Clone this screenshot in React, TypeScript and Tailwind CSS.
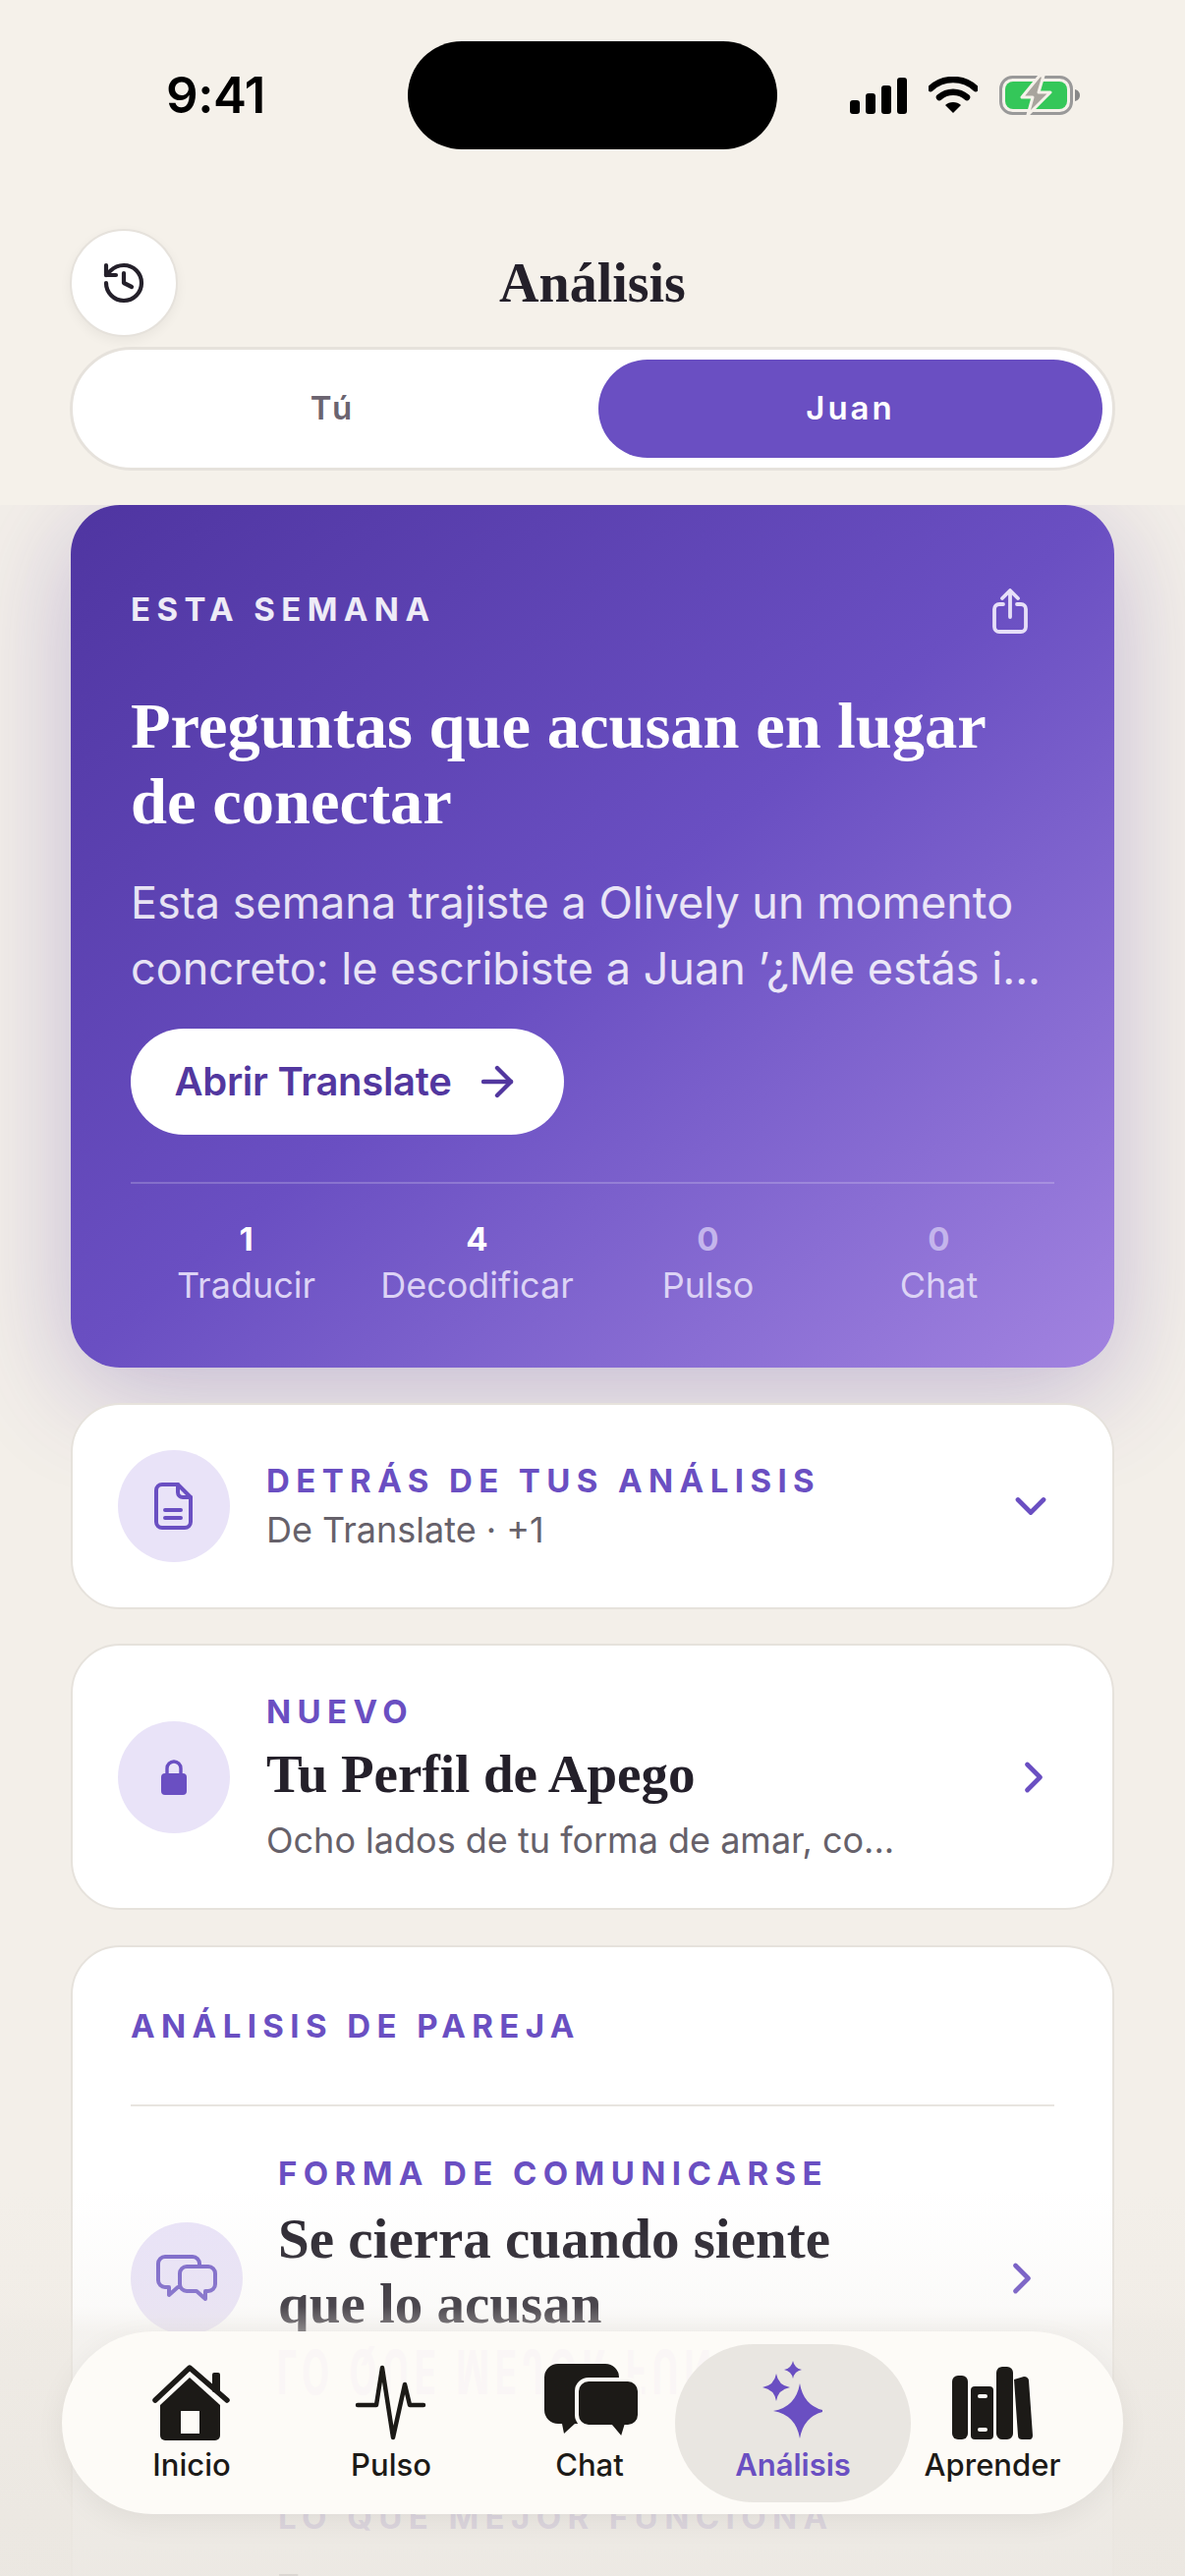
import React from 'react';
import { ArrowRight, ChevronDown, ChevronRight, History } from 'lucide-react';

const serif = "font-['Liberation_Serif',serif]";
const sans = "font-['Inter',sans-serif]";

const star = (cx: number, cy: number, rx: number, ry: number, k: number) =>
    `M${cx} ${cy - ry}Q${cx + k} ${cy - k} ${cx + rx} ${cy}Q${cx + k} ${cy + k} ${cx} ${cy + ry}Q${cx - k} ${cy + k} ${cx - rx} ${cy}Q${cx - k} ${cy - k} ${cx} ${cy - ry}Z`;

const HomeIcon = () => (
    <svg width="80" height="80" viewBox="0 0 80 80" fill="#1c1a17">
        <path d="M3 37 38 4 76 37" fill="none" stroke="#1c1a17" strokeWidth="5.5" strokeLinecap="round" strokeLinejoin="round" />
        <rect x="61" y="9" width="8" height="20" rx="2" />
        <path d="M38 14 69 42V73a5 5 0 0 1-5 5H13a5 5 0 0 1-5-5V42Z" />
        <rect x="29" y="48" width="19" height="23" fill="#fdfbf7" />
    </svg>
);

const PulseIcon = () => (
    <svg width="76" height="80" viewBox="0 0 76 80" fill="none" stroke="#1c1a17" strokeWidth="4.5" strokeLinecap="round" strokeLinejoin="round">
        <path d="M4 42H23L29 4 40 75 52 21 57 42H71" />
    </svg>
);

const ChatIcon = () => (
    <svg width="102" height="82" viewBox="0 0 102 82" fill="#1c1a17" className="ml-[5px]">
        <path d="M16 2H64A14 14 0 0 1 78 16V49A14 14 0 0 1 64 63H33L22 73 20 63H16A14 14 0 0 1 2 49V16A14 14 0 0 1 16 2Z" />
        <path d="M47 18H87A12 12 0 0 1 99 30V54A12 12 0 0 1 87 66H85L81 79 70 66H47A12 12 0 0 1 35 54V30A12 12 0 0 1 47 18Z" stroke="#fdfbf7" strokeWidth="4" />
    </svg>
);

const SparkIcon = () => (
    <svg width="70" height="84" viewBox="0 0 70 84" fill="#6a4fc2" className="-ml-[11px]">
        <path d={star(47, 52, 27, 28, 4)} />
        <path d={star(23, 28, 14, 14, 2)} />
        <path d={star(40, 10, 9, 9, 1.5)} />
    </svg>
);

const BooksIcon = () => (
    <svg width="90" height="80" viewBox="0 0 90 80" fill="#1c1a17">
        <rect x="4" y="12" width="16" height="65" rx="6" />
        <rect x="23" y="23" width="23" height="54" rx="4" />
        <rect x="49" y="3" width="17" height="74" rx="6" />
        <path d="M67 16 77 13C80 13 82 15 82 17L86 73C86 75 85 77 83 77H75C73 77 71 76 71 73Z" />
        <rect x="30" y="31" width="10" height="4" rx="2" fill="#fdfbf7" />
        <rect x="30" y="65" width="10" height="4" rx="2" fill="#fdfbf7" />
    </svg>
);

const ShareIcon = () => (
    <svg width="36" height="46" viewBox="0 0 36 46" fill="none" stroke="#e6dff8" strokeWidth="3.8" strokeLinecap="round" strokeLinejoin="round">
        <path d="M11 16H7a5 5 0 0 0-5 5V39a5 5 0 0 0 5 5H29a5 5 0 0 0 5-5V21a5 5 0 0 0-5-5H25" />
        <path d="M18 29V3M10 10 18 2 26 10" />
    </svg>
);

const DocIcon = () => (
    <svg width="40" height="48" viewBox="0 0 40 48" fill="none" stroke="#6a4fc2" strokeWidth="4" strokeLinecap="round" strokeLinejoin="round">
        <path d="M8 2H24L37 15V40a6 6 0 0 1-6 6H8a6 6 0 0 1-6-6V8a6 6 0 0 1 6-6Z" />
        <path d="M24 2V10a5 5 0 0 0 5 5H37M11 28H27M11 36H27" />
    </svg>
);

const LockIcon = () => (
    <svg width="28" height="36" viewBox="0 0 28 36" fill="#6a4fc2">
        <path d="M7 16V9a7 7 0 0 1 14 0V16" fill="none" stroke="#6a4fc2" strokeWidth="3.4" />
        <rect x="1" y="14" width="26" height="22" rx="4" />
    </svg>
);

const BubblesIcon = () => (
    <svg width="62" height="48" viewBox="0 0 62 48" fill="none" stroke="#7560c8" strokeWidth="4" strokeLinecap="round" strokeLinejoin="round">
        <path d="M9 2H37A7 7 0 0 1 44 9V26A7 7 0 0 1 37 33H22L13 41V33H9A7 7 0 0 1 2 26V9A7 7 0 0 1 9 2Z" />
        <path d="M31 12H53A7 7 0 0 1 60 19V30A7 7 0 0 1 53 37H50V45L41 37H31A7 7 0 0 1 24 30V19A7 7 0 0 1 31 12Z" fill="#e9e3f8" />
    </svg>
);

const StatusIcons = () => (
    <div className="flex items-center gap-[22px]">
        <div className="flex items-end gap-[6px]">
            <div className="w-[10px] h-[14px] rounded-[3px] bg-black" />
            <div className="w-[10px] h-[21px] rounded-[3px] bg-black" />
            <div className="w-[10px] h-[29px] rounded-[3px] bg-black" />
            <div className="w-[10px] h-[37px] rounded-[3px] bg-black" />
        </div>
        <svg width="50" height="38" viewBox="0 0 50 38">
            <path d="M2 12C15 0 35 0 48 12" fill="none" stroke="#000" strokeWidth="6.5" strokeLinecap="round" />
            <path d="M11 21C19 14 31 14 39 21" fill="none" stroke="#000" strokeWidth="6.5" strokeLinecap="round" />
            <path d="M17 29C21 25 29 25 33 29L25 37Z" />
        </svg>
        <svg width="84" height="40" viewBox="0 0 84 40">
            <rect x="1.5" y="1.5" width="72" height="37" rx="12" fill="none" stroke="#999" strokeWidth="3" />
            <rect x="6" y="6" width="63" height="28" rx="8" fill="#34c759" />
            <path d="M77 14C81 15 82 18 82 20C82 22 81 25 77 26Z" fill="#888" />
            <path d="M41 0 23 22H34L29 40 52 17H40L45 0Z" fill="#a8a49d" stroke="#f5f1ea" strokeWidth="3" strokeLinejoin="round" />
        </svg>
    </div>
);

const Stat = ({ value, label, dim }: { value: string; label: string; dim?: boolean }) => (
    <div className="flex flex-col items-center">
        <span className={`text-[33px] leading-[44px] font-bold ${dim ? 'text-[#c4b5ec]' : 'text-white'}`}>{value}</span>
        <span className="text-[36px] leading-[50px] text-[#dcd3f5]">{label}</span>
    </div>
);

const NavItem = ({ icon, label, active, className }: { icon: React.ReactNode; label: string; active?: boolean; className: string }) => (
    <div className={`relative shrink-0 flex flex-col items-center justify-end h-[161px] pb-[19px] ${active ? 'rounded-[80px] bg-[#e9e6e1]' : ''} ${className}`}>
        <div className="h-[84px] flex items-end justify-center">{icon}</div>
        <span className={`mt-[4px] text-[31px] leading-[38px] ${active ? 'font-semibold text-[#6a4fc2]' : 'font-medium text-[#1c1a17]'}`}>{label}</span>
    </div>
);

const IconCircle = ({ children }: { children: React.ReactNode }) => (
    <div className="w-[114px] h-[114px] shrink-0 rounded-full bg-[#e9e3f8] flex items-center justify-center text-[#6a4fc2]">{children}</div>
);

const labelClass = 'text-[33px] leading-[44px] font-bold tracking-[6.4px] text-[#6a4fc2]';

const App: React.FC = () => {
    return (
        <div className={`relative w-[1206px] h-[2622px] overflow-hidden bg-[#f3efe9] ${sans}`}>
            {/* Header */}
            <div className="relative z-10 bg-[#f5f1ea] h-[514px]">
                <div className="flex pt-[42px] h-[233px]">
                    <div className="w-[415px] h-[110px] flex items-center justify-center pl-[24px]">
                        <span className="text-[51px] font-semibold text-black tracking-[-0.5px]">9:41</span>
                    </div>
                    <div className="w-[376px] h-[110px] rounded-[55px] bg-black" />
                    <div className="w-[415px] h-[110px] flex items-center pl-[74px]">
                        <StatusIcons />
                    </div>
                </div>
                <div className="px-[71px]">
                    <div className="grid grid-cols-[110px_1fr_110px] items-center">
                        <div className="w-[110px] h-[110px] rounded-full bg-white border-2 border-[#e6e2dc] flex items-center justify-center shadow-[0_4px_12px_rgba(0,0,0,0.05)]">
                            <History size={48} strokeWidth={2.1} className="text-[#24202a]" />
                        </div>
                        <h1 className={`text-center text-[56px] font-bold text-[#24202a] ${serif}`}>Análisis</h1>
                    </div>
                    <div className="mt-[10px] h-[126px] rounded-[63px] bg-white border-[3px] border-[#e6e2dc] flex items-center pl-[10px] pr-[10px]">
                        <div className="w-[525px] pr-[16px] text-center text-[33px] font-semibold tracking-[3px] text-[#6b6470]">Tú</div>
                        <div className="flex-1 h-[100px] rounded-[50px] bg-[#6a4fc2] flex items-center justify-center text-[33px] font-semibold tracking-[3px] text-white">Juan</div>
                    </div>
                </div>
            </div>

            <div className="px-[72px] flex flex-col">
                {/* Hero */}
                <div className="h-[878px] rounded-[50px] bg-gradient-to-br from-[#4f35a1] via-[#6a4fc2] to-[#a283e0] px-[61px] pt-[84px] shadow-[0_24px_110px_rgba(84,56,160,0.3)]">
                    <div className="flex items-center justify-between h-[44px]">
                        <span className="text-[33px] leading-[44px] font-bold tracking-[6.4px] text-white/90">ESTA SEMANA</span>
                        <div className="mr-[27px] mt-[4px]"><ShareIcon /></div>
                    </div>
                    <h2 className={`mt-[58px] text-[66.5px] leading-[77px] font-bold text-white ${serif}`}>Preguntas que acusan en lugar<br />de conectar</h2>
                    <p className="mt-[31px] text-[45px] leading-[67px] text-white/85 h-[134px] overflow-hidden whitespace-nowrap">
                        Esta semana trajiste a Olively un momento<br />concreto: le escribiste a Juan ’¿Me estás i...
                    </p>
                    <div className="mt-[28px] w-[441px] h-[108px] rounded-[54px] bg-white flex items-center justify-center gap-[22px] text-[#52379f]">
                        <span className="text-[40px] font-semibold tracking-[-0.3px]">Abrir Translate</span>
                        <ArrowRight size={48} strokeWidth={2.2} />
                    </div>
                    <div className="mt-[48px] h-[2px] bg-white/20" />
                    <div className="mt-[34px] grid grid-cols-4">
                        <Stat value="1" label="Traducir" />
                        <Stat value="4" label="Decodificar" />
                        <Stat value="0" label="Pulso" dim />
                        <Stat value="0" label="Chat" dim />
                    </div>
                </div>

                {/* Detrás de tus análisis */}
                <div className="mt-[36px] h-[210px] rounded-[50px] bg-white border-2 border-[#e6e2dc] pl-[46px] pr-[57px] flex items-center gap-[37px]">
                    <IconCircle><DocIcon /></IconCircle>
                    <div className="flex-1">
                        <div className={labelClass}>DETRÁS DE TUS ANÁLISIS</div>
                        <div className="mt-[4px] text-[36px] leading-[48px] text-[#66616a]">De Translate · +1</div>
                    </div>
                    <ChevronDown size={52} strokeWidth={2.2} className="text-[#6a4fc2]" />
                </div>

                {/* Perfil de apego */}
                <div className="mt-[35px] h-[271px] rounded-[50px] bg-white border-2 border-[#e6e2dc] pl-[46px] pr-[54px] flex items-center gap-[37px]">
                    <IconCircle><LockIcon /></IconCircle>
                    <div className="flex-1">
                        <div className={labelClass}>NUEVO</div>
                        <div className={`mt-[9px] text-[55px] leading-[66px] font-bold text-[#24202a] ${serif}`}>Tu Perfil de Apego</div>
                        <div className="mt-[10px] text-[36px] leading-[48px] text-[#66616a]">Ocho lados de tu forma de amar, co...</div>
                    </div>
                    <ChevronRight size={52} strokeWidth={2.2} className="text-[#6a4fc2]" />
                </div>

                {/* Análisis de pareja */}
                <div className="mt-[36px] h-[800px] rounded-[50px] bg-white border-2 border-[#e6e2dc] px-[59px] pt-[58px]">
                    <div className={labelClass}>ANÁLISIS DE PAREJA</div>
                    <div className="mt-[58px] h-[2px] bg-[#e8e5e0]" />
                    <div className="mt-[46px] flex items-center">
                        <IconCircle><BubblesIcon /></IconCircle>
                        <div className="ml-[36px] flex-1">
                            <div className={labelClass}>FORMA DE COMUNICARSE</div>
                            <div className={`mt-[12px] text-[57px] leading-[66px] font-bold text-[#24202a] ${serif}`}>Se cierra cuando siente<br />que lo acusan</div>
                            {/* third line sits hidden behind the tab bar */}
                            <div className="h-[70px]" />
                        </div>
                        <ChevronRight size={52} strokeWidth={2.2} className="text-[#6a4fc2] mr-[7px]" />
                    </div>
                    <div className={`mt-[92px] ml-[150px] whitespace-nowrap ${labelClass}`}>LO QUE MEJOR FUNCIONA</div>
                    <div className={`mt-[22px] ml-[150px] whitespace-nowrap text-[57px] leading-[66px] font-bold text-[#24202a] ${serif}`}>Las preguntas que conectan</div>
                </div>
            </div>

            {/* Bottom fade over the list */}
            <div className="absolute inset-x-0 top-[2230px] bottom-0 z-20 bg-[linear-gradient(to_bottom,rgba(235,231,225,0)_0%,rgba(235,231,225,0.2)_30%,rgba(235,231,225,0.55)_37%,rgba(235,231,225,0.88)_84%,rgba(235,231,225,0.92)_100%)]" />

            {/* Tab bar */}
            <div className="absolute z-30 left-[63px] top-[2373px] w-[1080px] h-[186px] rounded-[93px] bg-[#fdfbf7] pl-[30px] flex items-center shadow-[0_8px_30px_rgba(0,0,0,0.06)] overflow-hidden">
                {/* faint refraction of the list behind the glass */}
                <div aria-hidden className="absolute left-[219px] top-[14px] whitespace-nowrap text-[36px] font-bold tracking-[6px] text-[#faf6f6] scale-y-[-1.7]">LO QUE MEJOR FUNCIONA</div>
                <NavItem icon={<HomeIcon />} label="Inicio" className="w-[204px]" />
                <NavItem icon={<PulseIcon />} label="Pulso" className="w-[202px]" />
                <NavItem icon={<ChatIcon />} label="Chat" className="w-[202px]" />
                <NavItem icon={<SparkIcon />} label="Análisis" active className="w-[240px] -ml-[14px]" />
                <NavItem icon={<BooksIcon />} label="Aprender" className="w-[166px]" />
            </div>
        </div>
    );
};

export default App;
